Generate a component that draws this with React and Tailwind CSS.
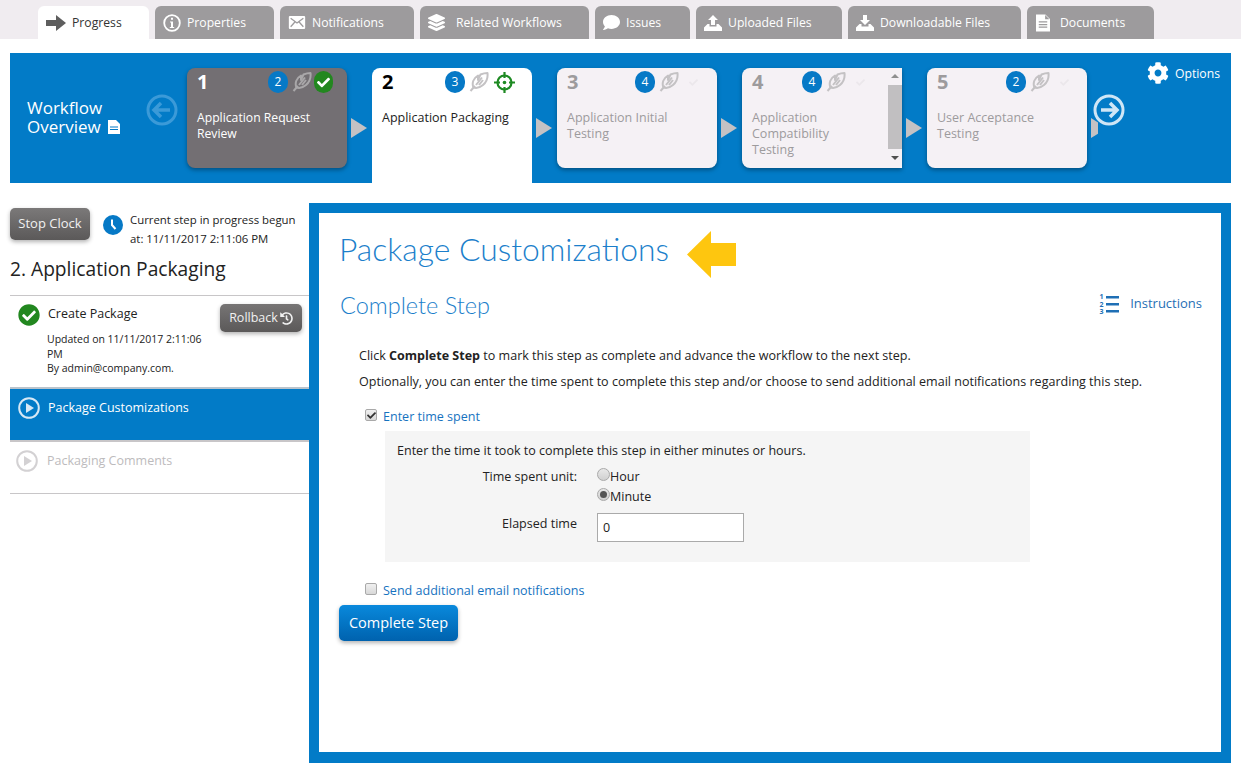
import { FaCheckCircle, FaCheck, FaCog, FaComment, FaHistory, FaLayerGroup } from "react-icons/fa";

const sans = "font-['Open_Sans','Noto_Sans',sans-serif]";

const ArrowTabIcon = () => (
  <svg width="20" height="16" viewBox="0 0 20 16">
    <path d="M0 5h10V0l10 8-10 8v-5H0z" fill="#5e5e5e" />
  </svg>
);
const InfoIcon = () => (
  <svg width="18" height="18" viewBox="0 0 18 18" fill="none">
    <circle cx="9" cy="9" r="7.8" stroke="#fff" strokeWidth="1.8" />
    <path d="M7 7.5h3V13h1.2v1H6.8v-1H8V8.500H7zM8 3.800h2v2H8z" fill="#fff" />
  </svg>
);
const MailIcon = () => (
  <svg width="18" height="15" viewBox="0 0 17 14" fill="none">
    <rect x="0.8" y="0.8" width="15.400" height="12.400" rx="1" fill="#fff" />
    <path d="M2.500 3l6 4.500 6-4.500M2.500 11l4-4.500M14.500 11l-4-4.500" stroke="#9d9b9d" strokeWidth="1.200" />
  </svg>
);
const UploadIcon = ({ down }) => (
  <svg width="18" height="16" viewBox="0 0 18 16">
    <path d={down ? "M7 0h4v5h3l-5 5-5-5h3z" : "M9 0l5 5h-3v5H7V5H4z"} fill="#fff" />
    <path d="M3.500 9L0 12.500V16h18v-3.500L14.500 9H12.500v2.500h-7V9z" fill="#fff" />
  </svg>
);
const DocIcon = () => (
  <svg className="w-[19px] pr-[3px]" width="19" height="18" viewBox="0 0 14 17" fill="none">
    <path d="M1 1h8l4 4v11H1z" fill="#fff" stroke="#fff" strokeWidth="1.200" />
    <path d="M3 7.500h8M3 10h8M3 12.500h8" stroke="#9d9b9d" strokeWidth="1.200" />
    <path d="M9 1v4h4" fill="#9d9b9d" />
  </svg>
);
const Feather = ({ color }) => (
  <svg width="20" height="20" viewBox="0 0 20 20" fill="none" stroke={color} strokeWidth="2" strokeLinejoin="round">
    <path d="M1.500 19L6 14" />
    <path d="M4.500 15.500C2.500 11 4.500 6 9 3.500L9 8l2.500-5.500C14 1.500 16.500 1 18.500 1c.5 4.500-1 9-4.500 12-3 2.500-6.500 3.500-9.500 2.500z" />
    <path d="M7 13l6-7.500M10 13l4-5" />
  </svg>
);
const Target = () => (
  <svg width="21" height="21" viewBox="0 0 21 21" fill="none" stroke="#1e8a23" strokeWidth="2.200">
    <circle cx="10.500" cy="10.500" r="7" />
    <circle cx="10.500" cy="10.500" r="1.800" fill="#1e8a23" stroke="none" />
    <path d="M10.500 0v6M10.500 15v6M0 10.500h6M15 10.500h6" />
  </svg>
);
const CircleArrow = ({ left, color }) => (
  <svg width="32" height="32" viewBox="0 0 32 32" fill="none" stroke={color} strokeWidth="3">
    <circle cx="16" cy="16" r="14" />
    <path d={left ? "M24 16H9M15 9l-7 7 7 7" : "M8 16h15M17 9l7 7-7 7"} strokeWidth="3.500" />
  </svg>
);
const Play = ({ color }) => (
  <svg width="22" height="22" viewBox="0 0 22 22" fill="none">
    <circle cx="11" cy="11" r="9.800" stroke={color} strokeWidth="2" />
    <path d="M8 6l8 5-8 5z" fill={color} />
  </svg>
);
const ListIcon = () => (
  <svg width="20" height="22" viewBox="0 0 20 22" fill="#1f6fb5">
    <rect x="7" y="3" width="13" height="2.500" />
    <rect x="7" y="10" width="13" height="2.500" />
    <rect x="7" y="17" width="13" height="2.500" />
    <text x="0.500" y="6" fontSize="7" fontWeight="700" fontFamily="Open Sans">1</text>
    <text x="0.500" y="13.500" fontSize="7" fontWeight="700" fontFamily="Open Sans">2</text>
    <text x="0.500" y="21" fontSize="7" fontWeight="700" fontFamily="Open Sans">3</text>
  </svg>
);

const tabs = [
  { label: "Progress", width: "w-[111px]", icon: <ArrowTabIcon />, active: true },
  { label: "Properties", width: "w-[119px]", icon: <InfoIcon /> },
  { label: "Notifications", width: "w-[134px]", icon: <MailIcon /> },
  { label: "Related Workflows", width: "w-[169px]", icon: <FaLayerGroup className="mr-[5px] text-[17px] text-white" /> },
  { label: "Issues", width: "w-[95px]", icon: <FaComment className="text-[17px] text-white" /> },
  { label: "Uploaded Files", width: "w-[146px]", icon: <UploadIcon /> },
  { label: "Downloadable Files", width: "w-[173px]", icon: <UploadIcon down /> },
  { label: "Documents", width: "w-[127px]", icon: <DocIcon /> },
];

const steps = [
  { n: 1, lines: ["Application Request", "Review"], count: 2, offset: "ml-[59px]", kind: "done" },
  { n: 2, lines: ["Application Packaging"], count: 3, offset: "ml-[51px]", kind: "current" },
  { n: 3, lines: ["Application Initial", "Testing"], count: 4, offset: "ml-[56px]", kind: "todo" },
  { n: 4, lines: ["Application", "Compatibility", "Testing"], count: 4, offset: "ml-[38px]", kind: "todo", scroll: true },
  { n: 5, lines: ["User Acceptance", "Testing"], count: 2, offset: "ml-[57px]", kind: "todo" },
];

const StepCard = ({ step }) => {
  const { kind } = step;
  const box =
    kind === "done"
      ? "h-[100px] rounded-lg bg-[#736f73] text-white shadow-[0_2px_4px_rgba(0,0,0,0.35)]"
      : kind === "current"
        ? "h-[115px] rounded-t-lg bg-white text-[#222]"
        : "h-[100px] bg-[#f5f1f5] text-[#9d9b9d] shadow-[0_2px_4px_rgba(0,0,0,0.35)] " +
          (step.scroll ? "rounded-l-lg" : "rounded-lg");
  return (
    <div className={`relative w-[160px] shrink-0 ${box}`}>
      <div className="flex items-start pl-[10px] pt-[3px]">
        <span className={`-mt-[2px] w-[12px] text-[20px] leading-[26px] font-bold ${kind === "current" ? "text-black" : ""}`}>{step.n}</span>
        <div className={`flex items-center ${step.offset}`}>
          <span className="flex h-[22px] w-[20px] items-center justify-center rounded-full bg-[#0679c6] text-[12px] font-normal text-white">
            {step.count}
          </span>
          <span className="ml-[4px]">
            <Feather color={kind === "done" ? "#a9a7a9" : "#c4c2c4"} />
          </span>
          {kind === "done" && (
            <span className="ml-[2px] flex h-[22px] w-[19px] items-center justify-center rounded-full bg-[#22871f]">
              <FaCheck className="text-[13px] text-white" />
            </span>
          )}
          {kind === "current" && (
            <span className="ml-[5px]">
              <Target />
            </span>
          )}
          {kind === "todo" && <FaCheck className="ml-[10px] text-[9px] text-[#ebe7eb]" />}
        </div>
      </div>
      <div className={`mt-[15px] px-[10px] leading-[16px] ${kind === "done" ? "text-[12.200px] font-medium" : "text-[12.500px]"}`}>
        {step.lines.map((line) => (
          <div key={line} className="whitespace-nowrap">{line}</div>
        ))}
      </div>
      {step.scroll && (
        <div className="absolute right-0 top-0 flex h-full w-[15px] flex-col items-center bg-[#f5f1f5]">
          <div className="mt-[6px] h-0 w-0 border-x-[4px] border-b-[4px] border-x-transparent border-b-[#8f8f8f]" />
          <div className="mt-[7px] h-[64px] w-[14px] bg-[#c1bfc1]" />
          <div className="mt-[7px] h-0 w-0 border-x-[4px] border-t-[4px] border-x-transparent border-t-[#505050]" />
        </div>
      )}
    </div>
  );
};

const StepArrow = () => (
  <div className="ml-[4px] mr-[5px] mt-[50px] h-0 w-0 shrink-0 border-y-[10px] border-l-[16px] border-y-transparent border-l-[#c4c2c4]" />
);

const WorkflowBar = () => (
  <div className="mx-[10px] mt-[14px] flex h-[130px] bg-[#027bc7] text-white">
    <div className="w-[136px] shrink-0 pl-[17px] pt-[45px] text-[17px]">
      <div className="leading-[19px]">Workflow</div>
      <div className="flex h-[19px] items-center gap-[7px] leading-[19px]">
        Overview
        <svg width="12" height="14" viewBox="0 0 12 14">
          <path d="M0 0h8l4 4v10H0z" fill="#fff" />
          <path d="M2 7h8M2 9.500h8" stroke="#027bc7" strokeWidth="1.200" />
        </svg>
      </div>
    </div>
    <div className="mt-[41px] w-[41px] shrink-0">
      <CircleArrow left color="#3b9ad8" />
    </div>
    <div className="mt-[15px] flex items-start">
      {steps.map((step, i) => (
        <div key={step.n} className="flex items-start">
          <StepCard step={step} />
          {i < steps.length - 1 ? (
            <StepArrow />
          ) : (
            <div className="relative">
              <div className="ml-[4px] mt-[50px] h-[20px] w-[7px] overflow-hidden">
                <div className="h-0 w-0 border-y-[10px] border-l-[16px] border-y-transparent border-l-[#c4c2c4]" />
              </div>
              <div className="absolute left-[6px] top-[26px]">
                <CircleArrow color="#cfe6f6" />
              </div>
            </div>
          )}
        </div>
      ))}
    </div>
    <div className="ml-[49px] mt-[10px] flex h-[22px] items-center gap-[6px] text-[12.200px]">
      <FaCog className="-mt-[2px] text-[22px]" />
      Options
    </div>
  </div>
);

const LeftPanel = () => (
  <div className="w-[299px] shrink-0 pt-[25px] text-[#222]">
    <div className="flex items-start">
      <button className="h-[32px] w-[80px] rounded-[5px] bg-gradient-to-b from-[#7b7979] to-[#5b5959] text-[13px] text-[#f1f1f1] shadow-[0_2px_4px_rgba(0,0,0,0.3)]">
        Stop Clock
      </button>
      <span className="ml-[13px] mt-[7px] flex h-[20px] w-[20px] items-center justify-center rounded-full bg-[#0679c6]">
        <svg width="20" height="20" viewBox="0 0 20 20" fill="none" stroke="#fff" strokeWidth="2">
          <path d="M9 4.500V10l3.500 4" />
        </svg>
      </span>
      <div className="ml-[7px] mt-[2px] whitespace-nowrap text-[11.400px] leading-[19px]">
        Current step in progress begun
        <br />
        at: 11/11/2017 2:11:06 PM
      </div>
    </div>
    <h2 className="mt-[7px] text-[19.200px] leading-[28px] text-[#222]">2. Application Packaging</h2>
    <div className="mt-[12px] flex h-[94px] border-y border-b-2 border-t-[#c8c6c8] border-b-[#b9c3cc]">
      <FaCheckCircle className="ml-[8px] mt-[8px] shrink-0 text-[22px] text-[#22871f]" />
      <div className="ml-[8px] w-[172px] pt-[9px]">
        <div className="text-[12.500px] leading-[18px]">Create Package</div>
        <div className="-ml-[1px] mt-[9px] w-[162px] text-[10.500px] leading-[14.500px]">
          Updated on 11/11/2017 2:11:06 PM
          <br />
          By admin@company.com.
        </div>
      </div>
      <button className="mt-[8px] flex h-[28px] w-[82px] items-center justify-center gap-[2px] rounded-[5px] bg-gradient-to-b from-[#777575] to-[#5b5959] text-[12.500px] text-[#f1f1f1] shadow-[0_2px_4px_rgba(0,0,0,0.3)]">
        Rollback
        <FaHistory className="text-[13px]" />
      </button>
    </div>
    <div className="flex h-[53px] border-b-2 border-b-[#c8c6c8] bg-[#027bc7] pt-[8px] text-white">
      <span className="ml-[8px]"><Play color="#d6e8f5" /></span>
      <span className="ml-[8px] text-[12.500px] leading-[21px]">Package Customizations</span>
    </div>
    <div className="flex h-[52px] border-b border-b-[#c8c6c8] pt-[8px] text-[#bdbbbd]">
      <span className="ml-[6px]"><Play color="#d3d1d3" /></span>
      <span className="ml-[9px] text-[12.500px] leading-[22px]">Packaging Comments</span>
    </div>
  </div>
);

const Check = ({ checked }) => (
  <span className="-mt-[4px] flex h-[12px] w-[12px] items-center justify-center rounded-[2px] border border-[#a9a9a9] bg-gradient-to-b from-[#f0f0f0] to-[#d8d8d8]">
    {checked && <FaCheck className="text-[9px] text-[#333]" />}
  </span>
);

const Radio = ({ checked }) => (
  <span className="-mt-[5px] flex h-[13px] w-[13px] items-center justify-center rounded-full border border-[#a9a9a9] bg-gradient-to-b from-[#e8e8e8] to-[#d0d0d0]">
    {checked && <span className="h-[7px] w-[7px] rounded-full bg-[#555]" />}
  </span>
);

const MainPanel = () => (
  <div className="mt-[20px] h-[560px] w-[922px] border-[10px] border-b-[11px] border-[#027bc7] bg-white text-[12.540px] text-[#222]">
    <div className="flex items-start pl-[20px] pt-[16px]">
      <h1 className="font-['Lato',sans-serif] text-[31.800px] font-light leading-[40px] text-[#1c7fcb]">Package Customizations</h1>
      <svg className="ml-[18px] mt-[2px]" width="49" height="47" viewBox="0 0 49 47">
        <path d="M24 0v12h25v23H24v12L0 23.500z" fill="#fec60f" />
      </svg>
    </div>
    <div className="mt-[11px] flex items-center justify-between pl-[21px] pr-[19px]">
      <h3 className="font-['Lato',sans-serif] text-[23.500px] font-light leading-[32px] text-[#1c7fcb]">Complete Step</h3>
      <a className="mb-[2px] flex items-center gap-[11px] text-[13px] text-[#1f6fb5]">
        <ListIcon />
        Instructions
      </a>
    </div>
    <div className="pl-[40px] pt-[26px]">
      <p className="leading-[18px]">
        Click <b className="font-bold">Complete Step</b> to mark this step as complete and advance the workflow to the next step.
      </p>
      <p className="mt-[8px] leading-[18px]">
        Optionally, you can enter the time spent to complete this step and/or choose to send additional email notifications regarding this step.
      </p>
      <div className="ml-[6px] mt-[17px] flex h-[18px] items-center gap-[6px] text-[#1673bf]">
        <Check checked />
        Enter time spent
      </div>
      <div className="ml-[26px] mt-[5px] h-[131px] w-[645px] bg-[#f5f5f5] pl-[12px] pt-[11px]">
        <div className="leading-[18px]">Enter the time it took to complete this step in either minutes or hours.</div>
        <div className="mt-[7px] grid grid-cols-[180px_1fr] gap-x-[20px]">
          <div className="text-right leading-[20px]">Time spent unit:</div>
          <div className="leading-[20px]">
            <div className="flex h-[20px] items-center">
              <Radio />
              Hour
            </div>
            <div className="flex h-[20px] items-center">
              <Radio checked />
              Minute
            </div>
          </div>
          <div className="mt-[7px] text-right leading-[20px]">Elapsed time</div>
          <input
            defaultValue="0"
            className="mt-[6px] h-[29px] w-[147px] border border-[#aaa] bg-white px-[5px] text-[12.500px] outline-none"
          />
        </div>
      </div>
      <div className="ml-[6px] mt-[20px] flex h-[18px] items-center gap-[6px] text-[#1673bf]">
        <Check />
        Send additional email notifications
      </div>
    </div>
    <button className="ml-[20px] mt-[5px] h-[36px] w-[119px] rounded-[5px] bg-gradient-to-b from-[#0a89dc] to-[#0062ae] text-[14.500px] text-white shadow-[0_2px_4px_rgba(0,0,0,0.3)]">
      Complete Step
    </button>
  </div>
);

export default function App() {
  return (
    <div className={`min-h-[769px] bg-white ${sans}`}>
      <div className="flex h-[39px] gap-[6px] bg-[#f0ecf0] pl-[38px] pt-[6px]">
        {tabs.map((tab) => (
          <div
            key={tab.label}
            className={`flex h-[33px] items-center gap-[6px] rounded-t-[6px] pl-[8px] text-[12.200px] ${tab.width} ${
              tab.active ? "bg-white text-[#333]" : "bg-[#9d9b9d] text-white"
            }`}
          >
            {tab.icon}
            <span className="mt-[2px] whitespace-nowrap">{tab.label}</span>
          </div>
        ))}
      </div>
      <WorkflowBar />
      <div className="mx-[10px] flex">
        <LeftPanel />
        <MainPanel />
      </div>
    </div>
  );
}
